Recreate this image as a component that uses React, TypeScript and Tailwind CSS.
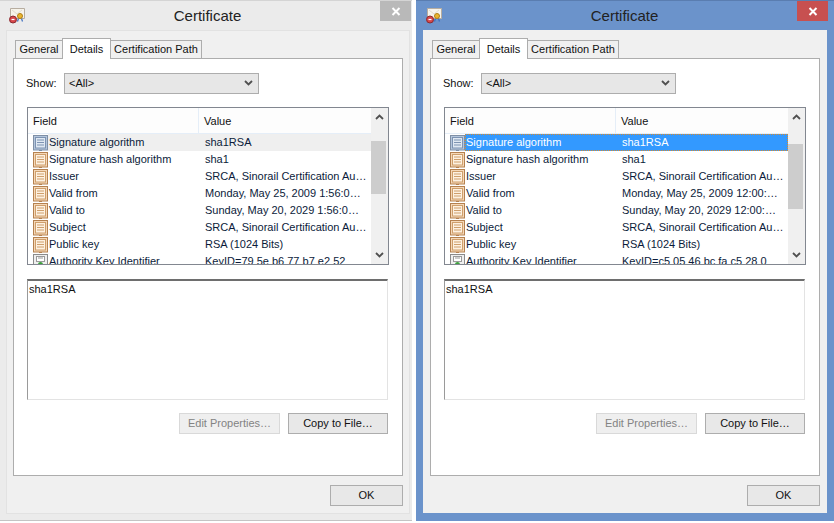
import type React from "react";

const FONT = "font-['Liberation_Sans','Noto_Sans',sans-serif]";

const ROWS = [
  { field: "Signature algorithm", key: "algo" },
  { field: "Signature hash algorithm", key: "hash" },
  { field: "Issuer", key: "issuer" },
  { field: "Valid from", key: "from" },
  { field: "Valid to", key: "to" },
  { field: "Subject", key: "subject" },
  { field: "Public key", key: "pub" },
  { field: "Authority Key Identifier", key: "aki" },
];

const LEFT_VALUES: Record<string, string> = {
  algo: "sha1RSA",
  hash: "sha1",
  issuer: "SRCA, Sinorail Certification Au…",
  from: "Monday, May 25, 2009 1:56:0…",
  to: "Sunday, May 20, 2029 1:56:0…",
  subject: "SRCA, Sinorail Certification Au…",
  pub: "RSA (1024 Bits)",
  aki: "KeyID=79 5e b6 77 b7 e2 52",
};

const RIGHT_VALUES: Record<string, string> = {
  ...LEFT_VALUES,
  from: "Monday, May 25, 2009 12:00:…",
  to: "Sunday, May 20, 2029 12:00:…",
  aki: "KeyID=c5 05 46 bc fa c5 28 0",
};

function CertIcon() {
  return (
    <svg width="17" height="17" viewBox="0 0 17 17" className="shrink-0">
      <path d="M1.5 1.5h14v10h-14z" fill="#f6f3ea" stroke="#b7ada0" />
      <path d="M3 3l5 4 5-4" fill="none" stroke="#e2dccf" />
      <path d="M9.5 11.5l-1 3M12.5 11.5l1 3" stroke="#3f6fc0" strokeWidth="1.2" />
      <circle cx="11" cy="9" r="2.5" fill="#eab52e" stroke="#b07f15" />
      <circle cx="4" cy="12.5" r="3.5" fill="#d8464a" stroke="#8a2b30" />
      <path d="M2.5 12.5h3" stroke="#fff" strokeWidth="1.2" />
    </svg>
  );
}

function FieldIcon({ selected, kind }: { selected?: boolean; kind: string }) {
  if (kind === "aki") {
    return (
      <svg width="15" height="16" viewBox="0 0 15 16" className="shrink-0">
        <rect x="0.5" y="0.5" width="14" height="15" fill="#efefef" stroke="#8b8b8b" />
        <rect x="3.5" y="2.5" width="8" height="5" fill="#fff" stroke="#9a9a9a" />
        <path d="M5 4h5" stroke="#9a9a9a" />
        <path d="M5 15V10.5a2.5 2.5 0 0 1 5 0V15z" fill="#3da13d" />
        <path d="M7.5 10v5" stroke="#fff" />
      </svg>
    );
  }
  const edge = selected ? "#7f8fa5" : "#b5814f";
  const face = selected ? "#b4c6dd" : "#f5d8b8";
  const inner = selected ? "#dfe8f2" : "#fdf1e1";
  const line = selected ? "#7d93b2" : "#cf9f6c";
  return (
    <svg width="15" height="16" viewBox="0 0 15 16" className="shrink-0">
      <rect x="0.5" y="0.5" width="14" height="14.5" fill={face} stroke={edge} />
      <rect x="2.5" y="2.5" width="10" height="10.5" fill={inner} stroke={line} />
      <path d="M4 5h7M4 7.5h7M4 10h7" stroke={line} />
      <path d="M6 15.5h3" stroke={edge} />
    </svg>
  );
}

function Chevron({ down, width = 9 }: { down?: boolean; width?: number }) {
  return (
    <svg width={width} height="6" viewBox="0 0 9 6">
      <path
        d={down ? "M1 1l3.5 3.5L8 1" : "M1 5l3.5-3.5L8 5"}
        fill="none"
        stroke="#505050"
        strokeWidth="1.8"
      />
    </svg>
  );
}

function Btn({ children, disabled, className }: { children: React.ReactNode; disabled?: boolean; className: string }) {
  return (
    <div
      className={
        "flex items-center justify-center border text-[11px] " +
        (disabled
          ? "border-[#d9d9d9] bg-[#efefef] text-[#838383] "
          : "border-[#adadad] bg-[#e8e8e8] text-[#111] ") +
        className
      }
    >
      {children}
    </div>
  );
}

function Tab({ label, active, className }: { label: string; active?: boolean; className: string }) {
  return (
    <div
      className={
        "flex justify-center border border-b-0 border-[#adadad] text-[11px] whitespace-nowrap " +
        (active ? "z-10 -mb-px h-[21px] items-start bg-white pt-[2px] " : "h-[18px] items-center bg-[#f0f0f0] ") +
        className
      }
    >
      {label}
    </div>
  );
}

function CertWindow({
  active,
  values,
  thumbTop,
  thumbHeight,
}: {
  active?: boolean;
  values: Record<string, string>;
  thumbTop: string;
  thumbHeight: string;
}) {
  return (
    <div
      className={
        "flex h-[521px] flex-col border-t " +
        (active
          ? "w-[418px] border-t-[#5a7db0] bg-[#6b93cb] pl-[7px]"
          : "w-[412px] border-b border-t-[#d4d4d4] border-b-[#c4c4c4] bg-[#ebebeb] pl-[6px]")
      }
    >
      <div className="flex h-[29px] shrink-0 items-start">
        <div className="mt-[6px] ml-[3px]">
          <CertIcon />
        </div>
        <div className="mt-[5px] flex-1 pl-[9px] text-center text-[15px] leading-5 text-[#222]">Certificate</div>
        <div
          className={
            "flex h-[20px] w-[31px] items-center justify-center " +
            (active ? "mr-[6px] bg-[#c75050]" : "mr-px bg-[#b9b9b9]")
          }
        >
          <svg width="10" height="9" viewBox="0 0 10 9">
            <path d="M1.5 1l7 7M8.5 1l-7 7" stroke="#fff" strokeWidth="2" />
          </svg>
        </div>
      </div>

      <div
        className={
          "flex w-[404px] flex-col bg-[#f0f0f0] px-[7px] " +
          (active ? "h-[483px]" : "h-[484px] outline outline-[#e2e2e2] -outline-offset-1")
        }
      >
        <div className="flex h-[28px] items-end pl-[2px]">
          <Tab label="General" className="w-[48px]" />
          <Tab label="Details" active className="-mx-px w-[49px]" />
          <Tab label="Certification Path" className="w-[92px]" />
        </div>

        <div className="flex h-[418px] w-[390px] flex-col border border-[#adadad] bg-white pl-[13px]">
          <div className="mt-[13px] flex h-[22px] items-center">
            <span className="w-[37px] -translate-x-px text-[11px]">Show:</span>
            <div className="flex h-[21px] w-[195px] items-center justify-between border border-[#adadad] bg-[#e7e7e7] px-[5px] pl-[4px] text-[11px]">
              <span>&lt;All&gt;</span>
              <Chevron down />
            </div>
          </div>

          <div className="mt-[13px] flex h-[158px] w-[362px] border border-[#828790] bg-white">
            <div className="flex min-w-0 flex-1 flex-col overflow-hidden">
              <div className="flex h-[26px] shrink-0 items-center border-b border-[#e5eef8] bg-[#fdfdfd] text-[11px]">
                <div className="h-full w-[171px] border-r border-[#e5eef8] pt-[5px] pl-[5px]">Field</div>
                <div className="h-full pt-[5px] pl-[5px]">Value</div>
              </div>
              {ROWS.map((r, i) => {
                const focused = i === 0 && active;
                return (
                  <div
                    key={r.key}
                    className="flex h-[17px] shrink-0 items-center text-[11px] leading-[17px] whitespace-nowrap text-[#0b1b3a]"
                  >
                    <div className="flex w-[5px] shrink-0" />
                    <FieldIcon kind={r.key} selected={i === 0} />
                    <div
                      className={
                        "flex h-[17px] flex-1 items-center " +
                        (focused
                          ? "border border-dotted border-[#d98a2b] bg-[#3399ff] text-white"
                          : i === 0
                            ? "bg-[#efefef] pl-px"
                            : "pl-px")
                      }
                    >
                      <span className="w-[156px] shrink-0">{r.field}</span>
                      <span>{values[r.key]}</span>
                    </div>
                  </div>
                );
              })}
            </div>
            <div className="relative flex w-[17px] shrink-0 flex-col items-center justify-between bg-[#f0f0f0] py-[6px]">
              <Chevron />
              <div className={"absolute left-0 w-[15px] bg-[#cdcdcd] " + thumbTop + " " + thumbHeight} />
              <Chevron down />
            </div>
          </div>

          <div className="mt-[14px] h-[121px] w-[361px] border border-t-2 border-[#9a9a9a] border-t-[#6e6e6e] border-r-[#e3e3e3] border-b-[#e3e3e3] border-l-[#9a9a9a] pl-px text-[11px] leading-[16px]">
            sha1RSA
          </div>

          <div className="mt-[13px] flex w-[361px] justify-end gap-[8px]">
            <Btn disabled className="h-[21px] w-[101px]">
              Edit Properties…
            </Btn>
            <Btn className="h-[21px] w-[100px]">Copy to File…</Btn>
          </div>
        </div>

        <div className="flex flex-1 justify-end pt-[9px]">
          <Btn className="h-[21px] w-[73px]">OK</Btn>
        </div>
      </div>
    </div>
  );
}

export default function App() {
  return (
    <div className={"flex h-[523px] w-[834px] gap-[4px] overflow-hidden bg-white text-[#111] " + FONT}>
      <CertWindow values={LEFT_VALUES} thumbTop="top-[33px]" thumbHeight="h-[53px]" />
      <CertWindow active values={RIGHT_VALUES} thumbTop="top-[36px]" thumbHeight="h-[65px]" />
    </div>
  );
}
